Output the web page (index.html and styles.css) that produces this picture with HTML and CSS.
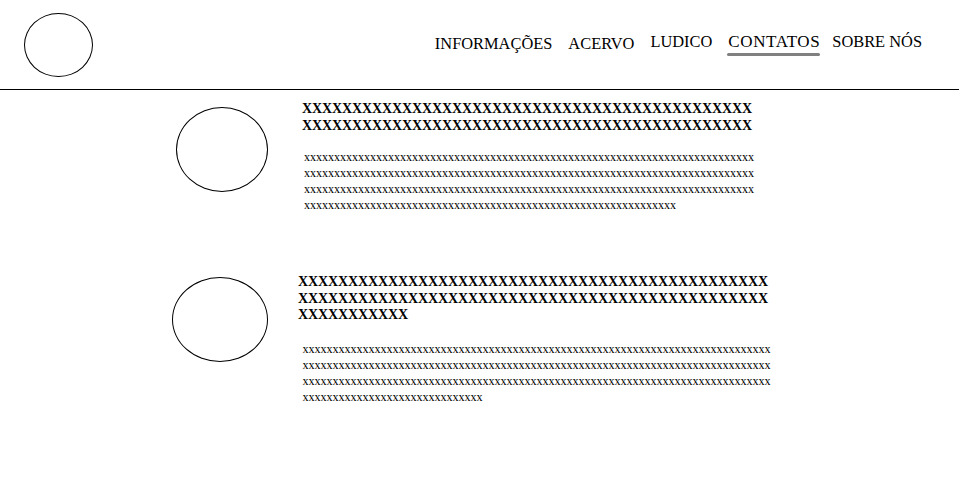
FILE: index.html
```html
<!DOCTYPE html>
<html lang="pt">
<head>
<meta charset="utf-8">
<title>Contatos</title>
<link rel="stylesheet" href="styles.css">
</head>
<body>
<header class="site-header">
  <div class="logo" aria-label="logo"></div>
  <nav class="nav">
    <a class="nav-item nav-item--low" href="#">INFORMAÇÕES</a>
    <a class="nav-item nav-item--low" href="#">ACERVO</a>
    <a class="nav-item" href="#">LUDICO</a>
    <a class="nav-item nav-item--active" href="#">CONTATOS</a>
    <a class="nav-item" href="#">SOBRE NÓS</a>
  </nav>
</header>
<main class="content">
  <article class="article article--first">
    <div class="avatar"></div>
    <div class="article-body">
      <h2 class="article-title">XXXXXXXXXXXXXXXXXXXXXXXXXXXXXXXXXXXXXXXXXXXXX XXXXXXXXXXXXXXXXXXXXXXXXXXXXXXXXXXXXXXXXXXXXX</h2>
      <p class="article-text">xxxxxxxxxxxxxxxxxxxxxxxxxxxxxxxxxxxxxxxxxxxxxxxxxxxxxxxxxxxxxxxxxxxxxxxxxxx xxxxxxxxxxxxxxxxxxxxxxxxxxxxxxxxxxxxxxxxxxxxxxxxxxxxxxxxxxxxxxxxxxxxxxxxxxx xxxxxxxxxxxxxxxxxxxxxxxxxxxxxxxxxxxxxxxxxxxxxxxxxxxxxxxxxxxxxxxxxxxxxxxxxxx xxxxxxxxxxxxxxxxxxxxxxxxxxxxxxxxxxxxxxxxxxxxxxxxxxxxxxxxxxxxxx</p>
    </div>
  </article>
  <article class="article article--second">
    <div class="avatar"></div>
    <div class="article-body">
      <h2 class="article-title">XXXXXXXXXXXXXXXXXXXXXXXXXXXXXXXXXXXXXXXXXXXXXXX XXXXXXXXXXXXXXXXXXXXXXXXXXXXXXXXXXXXXXXXXXXXXXX XXXXXXXXXXX</h2>
      <p class="article-text">xxxxxxxxxxxxxxxxxxxxxxxxxxxxxxxxxxxxxxxxxxxxxxxxxxxxxxxxxxxxxxxxxxxxxxxxxxxxxx xxxxxxxxxxxxxxxxxxxxxxxxxxxxxxxxxxxxxxxxxxxxxxxxxxxxxxxxxxxxxxxxxxxxxxxxxxxxxx xxxxxxxxxxxxxxxxxxxxxxxxxxxxxxxxxxxxxxxxxxxxxxxxxxxxxxxxxxxxxxxxxxxxxxxxxxxxxx xxxxxxxxxxxxxxxxxxxxxxxxxxxxxx</p>
    </div>
  </article>
</main>
</body>
</html>
```
FILE: styles.css
```css
* { box-sizing: content-box; }

body {
  margin: 0;
  font-family: "Liberation Serif", "Times New Roman", serif;
  color: #000;
  background: #fff;
}

.site-header {
  display: flex;
  justify-content: space-between;
  align-items: flex-start;
  height: 89px;
  border-bottom: 1px solid #000;
}

.logo {
  width: 67px;
  height: 62px;
  border: 1px solid #000;
  border-radius: 50%;
  margin: 13px 0 0 24px;
}

.nav {
  display: flex;
  align-items: flex-start;
  gap: 16px;
  margin: 32.4px 37px 0 0;
  font-size: 16.4px;
}

.nav-item {
  color: #000;
  text-decoration: none;
  line-height: normal;
}

.nav-item--low {
  padding-top: 1.5px;
}

.nav-item--active {
  font-size: 17px;
  letter-spacing: 0.6px;
  margin-right: -4px;
}

.nav-item--active::after {
  content: "";
  display: block;
  height: 3px;
  margin: 0.5px 0 0 -1px;
  background: #808080;
  border-radius: 2px;
}

.article {
  display: flex;
  align-items: flex-start;
}

.avatar {
  flex: none;
  border: 1px solid #000;
  border-radius: 50%;
}

.article--first {
  margin-top: 11px;
  padding-left: 176px;
}

.article--first .avatar {
  width: 90px;
  height: 83px;
  margin: 6px 34px 0 0;
}

.article--first .article-body {
  width: 460px;
}

.article--second {
  margin-top: 61px;
  padding-left: 172px;
}

.article--second .avatar {
  width: 94px;
  height: 83px;
  margin: 3px 30px 0 0;
}

.article--second .article-body {
  width: 480px;
}

.article-title {
  margin: 0;
  font-size: 14px;
  font-weight: bold;
  letter-spacing: -0.108px;
  line-height: 16.5px;
}

.article-text {
  margin: 15px 0 0 2px;
  font-size: 12px;
  line-height: 16px;
}

.article--second .article-text {
  margin: 17px 0 0 4.5px;
}
```
